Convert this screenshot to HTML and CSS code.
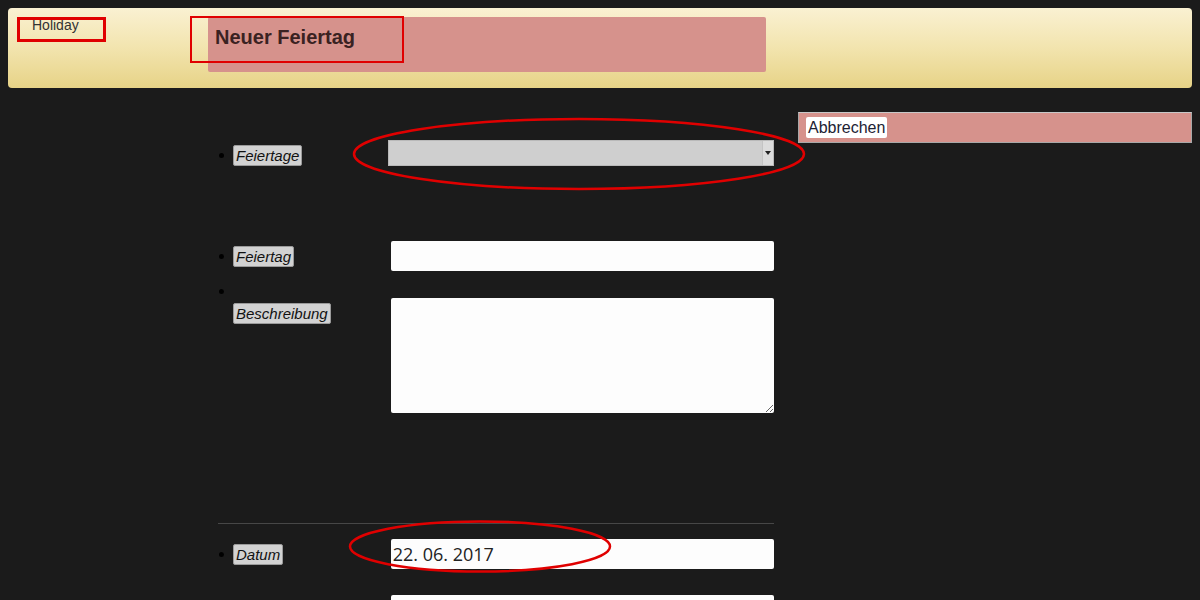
FILE: index.html
```html
<!DOCTYPE html>
<html lang="de">
<head>
    <meta charset="UTF-8">
    <meta name="viewport" content="width=device-width, initial-scale=1.0">
    <title>Neuer Feiertag</title>
    <link rel="stylesheet" href="styles.css">
</head>
<body>
    <header class="topbar">
        <div class="brand">Holiday</div>
        <h1 class="page-title">Neuer Feiertag</h1>
        <span class="mark mark-brand"></span>
        <span class="mark mark-title"></span>
    </header>

    <main class="layout">
        <form class="holiday-form">
            <ul class="fields">
                <li class="row row-select">
                    <span class="dot"></span>
                    <span class="label-col"><label class="tag">Feiertage</label></span>
                    <div class="select"><span class="arrow"></span></div>
                </li>
                <li class="row row-name">
                    <span class="dot"></span>
                    <span class="label-col"><label class="tag">Feiertag</label></span>
                    <input class="field" type="text">
                </li>
                <li class="row row-text">
                    <span class="dot"></span>
                    <span class="label-col"><label class="tag">Beschreibung</label></span>
                    <textarea class="field area"></textarea>
                </li>
            </ul>

            <hr class="divider">

            <ul class="fields">
                <li class="row row-date">
                    <span class="dot"></span>
                    <span class="label-col"><label class="tag">Datum</label></span>
                    <input class="field date" type="text" value="22. 06. 2017">
                </li>
                <li class="row row-next">
                    <span class="dot"></span>
                    <span class="label-col"></span>
                    <input class="field" type="text">
                </li>
            </ul>
        </form>

        <aside class="actions">
            <div class="action-bar">
                <button type="button" class="cancel">Abbrechen</button>
            </div>
        </aside>
    </main>

    <!-- red review marks -->
    <svg class="marks" width="1200" height="600" viewBox="0 0 1200 600">
        <ellipse cx="579" cy="154" rx="225" ry="35" fill="none" stroke="#e00000" stroke-width="2.5"/>
        <ellipse cx="480" cy="546.5" rx="130" ry="25" fill="none" stroke="#e00000" stroke-width="2.5"/>
    </svg>
</body>
</html>
```

FILE: styles.css
```css
body {
    margin: 8px;
    background-color: #1b1b1b;
    font-family: "Liberation Sans", Arial, sans-serif;
    color: #222;
}

.topbar {
    position: relative;
    display: flex;
    align-items: flex-start;
    height: 80px;
    padding: 9px 0 0 9px;
    box-sizing: border-box;
    border-radius: 4px;
    background: linear-gradient(to bottom, #faf1d2 0%, #f2e4ae 50%, #e7d387 100%);
}

.brand {
    width: 191px;
    padding: 0 0 0 15px;
    box-sizing: border-box;
    font-size: 14px;
    color: #333;
}

.page-title {
    width: 558px;
    height: 55px;
    margin: 0;
    padding: 9px 7px;
    box-sizing: border-box;
    background-color: #d6928c;
    border-radius: 2px;
    font-size: 20px;
    font-weight: bold;
    color: #3a2222;
}

.mark {
    position: absolute;
    border: 2px solid #e00000;
    box-sizing: border-box;
}

.mark-brand {
    left: 9px;
    top: 9px;
    width: 89px;
    height: 25px;
    border-width: 3px;
}

.mark-title {
    left: 182px;
    top: 8px;
    width: 214px;
    height: 47px;
}

.layout {
    display: grid;
    grid-template-columns: 210px 556px 1fr;
    padding-top: 24px;
}

.holiday-form {
    grid-column: 2;
    margin: 0;
    padding-top: 28px;
}

.fields {
    list-style: none;
    margin: 0;
    padding: 0;
}

.row {
    display: flex;
    align-items: center;
}

.dot {
    width: 5px;
    height: 5px;
    margin: 0 9px 0 1px;
    border-radius: 50%;
    background-color: #000;
}

.label-col {
    width: 155px;
}

.tag {
    display: inline-block;
    padding: 1px 2px;
    background-color: #d2d2d2;
    border: 1px solid #9a9a9a;
    border-radius: 2px;
    font-size: 15px;
    font-style: italic;
    line-height: 17px;
    color: #111;
}

.row-select .label-col {
    margin-top: 5px;
}

.row-select .dot {
    margin-top: 5px;
}

.select {
    position: relative;
    width: 386px;
    height: 26px;
    box-sizing: border-box;
    background-color: #cfcfcf;
    border: 1px solid #b9b9b9;
}

.select .arrow {
    position: absolute;
    right: 0;
    top: 0;
    width: 10px;
    height: 24px;
    background-color: #dcdcdc;
    border-left: 1px solid #c4c4c4;
}

.select .arrow::after {
    content: "";
    position: absolute;
    left: 2px;
    top: 10px;
    border-left: 3px solid transparent;
    border-right: 3px solid transparent;
    border-top: 4px solid #222;
}

.field {
    width: 384px;
    height: 30px;
    margin: 0 0 0 3px;
    padding: 0 2px;
    box-sizing: border-box;
    background-color: #fdfdfd;
    border: none;
    border-radius: 2px;
    font-family: "Open Sans", "Noto Sans", sans-serif;
    font-size: 18px;
    color: #222;
}

.row-name {
    margin-top: 75px;
}

.row-text {
    align-items: flex-start;
    margin-top: 27px;
}

.row-text .dot {
    margin-top: -9px;
}

.row-text .label-col {
    margin-top: 5px;
}

.area {
    height: 115px;
    resize: vertical;
}

.divider {
    margin: 110px 0 15px;
    border: none;
    border-top: 1px solid #474747;
}

.row-next {
    margin-top: 26px;
}

.actions {
    grid-column: 3;
    margin-left: 24px;
}

.action-bar {
    height: 31px;
    padding: 4px 7px;
    box-sizing: border-box;
    background-color: #d6928c;
    border: 1px solid #a8a8a8;
    border-top-color: #c8c8c8;
}

.cancel {
    height: 21px;
    padding: 0 2px;
    background-color: #fff;
    border: none;
    border-radius: 2px;
    font-family: "Liberation Sans", Arial, sans-serif;
    font-size: 16px;
    color: #1c2233;
    cursor: pointer;
}

.marks {
    position: absolute;
    left: 0;
    top: 0;
    pointer-events: none;
}
```
